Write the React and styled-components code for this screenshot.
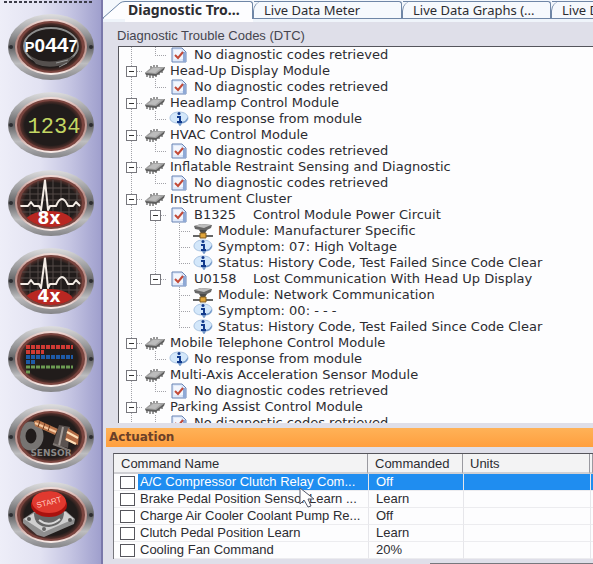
import React, { useState } from "react";
import styled, { createGlobalStyle } from "styled-components";

const TREE = [
    { guides: ["line", "end"], icon: "doc", text: "No diagnostic codes retrieved" },
    { guides: ["toggle"], icon: "chip", text: "Head-Up Display Module" },
    { guides: ["line", "end"], icon: "doc", text: "No diagnostic codes retrieved" },
    { guides: ["toggle"], icon: "chip", text: "Headlamp Control Module" },
    { guides: ["line", "end"], icon: "info", text: "No response from module" },
    { guides: ["toggle"], icon: "chip", text: "HVAC Control Module" },
    { guides: ["line", "end"], icon: "doc", text: "No diagnostic codes retrieved" },
    { guides: ["toggle"], icon: "chip", text: "Inflatable Restraint Sensing and Diagnostic" },
    { guides: ["line", "end"], icon: "doc", text: "No diagnostic codes retrieved" },
    { guides: ["toggle"], icon: "chip", text: "Instrument Cluster" },
    { guides: ["line", "toggle"], icon: "doc", code: "B1325", text: "Control Module Power Circuit" },
    { guides: ["line", "line", "tee"], icon: "net", text: "Module: Manufacturer Specific" },
    { guides: ["line", "line", "tee"], icon: "info", text: "Symptom: 07: High Voltage" },
    { guides: ["line", "line", "end"], icon: "info", text: "Status: History Code, Test Failed Since Code Clear" },
    { guides: ["line", "toggleEnd"], icon: "doc", code: "U0158", text: "Lost Communication With Head Up Display" },
    { guides: ["line", "blank", "tee"], icon: "net", text: "Module: Network Communication" },
    { guides: ["line", "blank", "tee"], icon: "info", text: "Symptom: 00: - - -" },
    { guides: ["line", "blank", "end"], icon: "info", text: "Status: History Code, Test Failed Since Code Clear" },
    { guides: ["toggle"], icon: "chip", text: "Mobile Telephone Control Module" },
    { guides: ["line", "end"], icon: "info", text: "No response from module" },
    { guides: ["toggle"], icon: "chip", text: "Multi-Axis Acceleration Sensor Module" },
    { guides: ["line", "end"], icon: "doc", text: "No diagnostic codes retrieved" },
    { guides: ["toggle"], icon: "chip", text: "Parking Assist Control Module" },
    { guides: ["line", "end"], icon: "doc", text: "No diagnostic codes retrieved" },
];

const COMMANDS = [
    { name: "A/C Compressor Clutch Relay Com...", value: "Off" },
    { name: "Brake Pedal Position Sensor Learn ...", value: "Learn" },
    { name: "Charge Air Cooler Coolant Pump Re...", value: "Off" },
    { name: "Clutch Pedal Position Learn", value: "Learn" },
    { name: "Cooling Fan Command", value: "20%" },
];

const TABS = ["Live Data Meter", "Live Data Graphs (...", "Live Data"];

/* ---------- side bar drawings ---------- */

function CodesArt() {
    return (
        <g>
            <ellipse cx="43" cy="32" rx="27" ry="18" fill="none" stroke="#8d8d8d" strokeWidth="2" />
            <path d="M20 40 Q36 54 66 42 L60 49 Q42 56 28 50z" fill="#55504e" />
            <text x="43" y="38" textAnchor="middle" fill="#fff" fontFamily="'Liberation Sans', sans-serif" fontWeight="bold">
                <tspan fontSize="15">P</tspan>
                <tspan fontSize="19">0</tspan>
                <tspan fontSize="21">44</tspan>
                <tspan fontSize="16">7</tspan>
            </text>
            <path d="M48 49l12 -3M51 53l8 -4" stroke="#999" strokeWidth="1" />
        </g>
    );
}

function DigitsArt() {
    return (
        <text x="46" y="41" fontSize="22" textAnchor="middle" fill="#c3d663" fontFamily="'Liberation Mono', monospace">1234</text>
    );
}

function ScopeArt({ label }) {
    return (
        <g>
            <g stroke="#544b48" strokeWidth="1">
                <path d="M13 18h60M13 24h60M13 30h60M13 42h60" />
                <path d="M22 12v42M30 10v46M45 10v46M53 10v46M61 10v46M69 14v34" />
            </g>
            <ellipse cx="41" cy="52" rx="24" ry="11" fill="#b92722" />
            <path
                d="M11 36H20L23 32L26 36H31L33 40L37 10L40 40L42 36H48Q51 29 54 29Q57 29 60 36H65L68 32L72 36"
                fill="none" stroke="#f3ebe4" strokeWidth="2" strokeLinejoin="round"
            />
            <text x="41" y="54" fontSize="17" fontWeight="bold" textAnchor="middle" fill="#fff" fontFamily="'DejaVu Sans', sans-serif">{label}</text>
        </g>
    );
}

function BarsArt() {
    return (
        <g strokeWidth="4" strokeDasharray="4 1">
            <path d="M18 21H65M18 26H36" stroke="#cf3a33" />
            <path d="M18 31H65M18 36H27" stroke="#1e5aa6" />
            <path d="M18 41H65M18 46H22" stroke="#6c9a52" strokeWidth="3" />
        </g>
    );
}

function SensorArt() {
    return (
        <g>
            <ellipse cx="23" cy="32" rx="9" ry="11" fill="none" stroke="#777472" strokeWidth="7" />
            <text x="43" y="52" fontSize="9" fontWeight="bold" textAnchor="middle" fill="#8a8785" fontFamily="'DejaVu Sans', sans-serif">SENSOR</text>
            <path d="M26 17L30 16L50 25L47 31L27 22z" fill="#b8744a" />
            <path d="M27 19L48 28" stroke="#f6c9a0" strokeWidth="2" />
            <path d="M32 17l-2 6M37 19l-2 6M42 21l-2 6" stroke="#6f3b20" strokeWidth="1" />
            <path d="M51 21L62 23L60 44L45 40z" fill="#5b5350" />
            <path d="M55 23L51 42" stroke="#a39a95" strokeWidth="2" />
            <path d="M60 24L71 31L70 41L57 36z" fill="#b06a45" />
            <path d="M59 28L70 34M58 35L68 40" stroke="#ffe0b8" strokeWidth="2" />
            <path d="M45 40l8 3 7 3" stroke="#7d7672" strokeWidth="2" fill="none" />
        </g>
    );
}

function StartArt() {
    return (
        <g>
            <path d="M15 37L27 29L58 29L67 37L66 42L36 55L29 53L15 41z" fill="#8f8f8f" />
            <path d="M16 37L28 30L58 30L66 37L36 50z" fill="#cfcfcf" />
            <path d="M26 31Q26 45 41 45Q56 43 56 30z" fill="#666" />
            <path d="M31 38Q41 46 52 37" stroke="#d8d8d8" strokeWidth="2" fill="none" />
            <circle cx="21" cy="37" r="2" fill="#555" />
            <circle cx="36" cy="47" r="2" fill="#666" />
            <circle cx="62" cy="38" r="2" fill="#555" />
            <ellipse cx="41" cy="23" rx="18" ry="12" fill="#a9120e" />
            <ellipse cx="41" cy="20" rx="17" ry="11" fill="#e0392f" />
            <text x="41" y="23" fontSize="8" textAnchor="middle" fill="#ffc6bd" transform="rotate(-14 41 20)" fontFamily="'Liberation Sans', sans-serif">START</text>
        </g>
    );
}

const GAUGES = [
    { id: "codes", label: "Trouble codes", art: <CodesArt /> },
    { id: "digits", label: "Live data", art: <DigitsArt /> },
    { id: "scope8", label: "Graph eight channels", art: <ScopeArt label="8x" /> },
    { id: "scope4", label: "Graph four channels", art: <ScopeArt label="4x" /> },
    { id: "bars", label: "Monitors", art: <BarsArt /> },
    { id: "sensor", label: "Oxygen sensor", art: <SensorArt /> },
    { id: "start", label: "Start", art: <StartArt /> },
];

function Gauge({ id, label, art }) {
    return (
        <GaugeButton type="button" aria-label={label}>
            <svg width="86" height="66" viewBox="0 0 86 66">
                <defs>
                    <linearGradient id={id + "-steel"} x1="0" y1="0" x2="0" y2="1">
                        <stop offset="0" stopColor="#dededf" />
                        <stop offset="0.3" stopColor="#98989a" />
                        <stop offset="0.5" stopColor="#5f5f61" />
                        <stop offset="0.75" stopColor="#bdbdbf" />
                        <stop offset="1" stopColor="#858588" />
                    </linearGradient>
                    <linearGradient id={id + "-ring"} x1="0" y1="0" x2="0" y2="1">
                        <stop offset="0" stopColor="#f2dcd8" />
                        <stop offset="0.35" stopColor="#b98d87" />
                        <stop offset="0.7" stopColor="#c9a5a0" />
                        <stop offset="1" stopColor="#fbeeea" />
                    </linearGradient>
                    <radialGradient id={id + "-face"}>
                        <stop offset="0.85" stopColor="#211c1b" />
                        <stop offset="1" stopColor="#54302b" />
                    </radialGradient>
                    <clipPath id={id + "-clip"}>
                        <ellipse cx="43" cy="33" rx="31" ry="24" />
                    </clipPath>
                </defs>
                <ellipse cx="43" cy="33" rx="43" ry="33" fill={`url(#${id}-steel)`} />
                <ellipse cx="43" cy="33" rx="36" ry="28" fill={`url(#${id}-ring)`} />
                <ellipse cx="43" cy="33" rx="34" ry="26" fill="#7a453f" />
                <ellipse cx="43" cy="33" rx="31" ry="24" fill={`url(#${id}-face)`} />
                <g clipPath={`url(#${id}-clip)`}>{art}</g>
                <circle cx="3" cy="33" r="2" fill="#2c2c30" />
                <circle cx="83" cy="33" r="2" fill="#2c2c30" />
            </svg>
        </GaugeButton>
    );
}

/* ---------- tree icons ---------- */

function ChipIcon() {
    return (
        <svg width="22" height="16" viewBox="0 0 22 16">
            <path d="M3 11v3M6 12v3M9 12v3M12 11v3M15 9v3M18 7v3M7 5V3M10 4V2M13 4V2" stroke="#333" strokeWidth="1" />
            <path d="M1 10L8 4L21 4L20 7L12 13L2 12z" fill="#5d5d5d" />
            <path d="M1 10L8 4L21 4L12 11z" fill="#a3a3a3" />
            <path d="M4 9L9 5L17 5L11 10z" fill="#bcbcbc" />
        </svg>
    );
}

function DocIcon() {
    return (
        <svg width="16" height="16" viewBox="0 0 16 16">
            <path d="M1 1H11L15 5V15H1z" fill="#dfe9fa" stroke="#6883b4" />
            <path d="M11 1V5H15V15H12z" fill="#8fa9d6" />
            <path d="M3 3H10V6H12V12H3z" fill="#f3f6fd" />
            <path d="M4 8L7 11L12 5" fill="none" stroke="#c24a38" strokeWidth="2" />
        </svg>
    );
}

function InfoIcon() {
    return (
        <svg width="20" height="16" viewBox="0 0 20 16">
            <path d="M10 1C16 1 19 4 19 7C19 10 16 12 13 12L11 15L9 12C4 12 1 10 1 7C1 4 4 1 10 1z" fill="#d3e7fa" stroke="#a9c4e2" />
            <path d="M13 12C16 12 19 10 19 6L16 10L9 12L11 15z" fill="#6f94c6" />
            <path d="M8 6H11V11M8 11H13" fill="none" stroke="#123a8c" strokeWidth="2" />
            <circle cx="10" cy="2.500" r="1.500" fill="#123a8c" />
        </svg>
    );
}

function NetIcon() {
    return (
        <svg width="22" height="16" viewBox="0 0 22 16">
            <path d="M2 3L9 1L20 2L19 5L13 8L3 6z" fill="#666" />
            <path d="M3 3L9 1L19 2L12 5z" fill="#bdbdbd" />
            <path d="M7 7H15L13 10H9z" fill="#4c4c4c" />
            <path d="M1 13H21" stroke="#666" strokeWidth="2" />
            <path d="M8 10H14V15H8z" fill="#e1a53a" stroke="#7c5a22" />
        </svg>
    );
}

const ICONS = { chip: <ChipIcon />, doc: <DocIcon />, info: <InfoIcon />, net: <NetIcon /> };

function TreeRow({ row }) {
    return (
        <Row>
            {row.guides.map((kind, i) => (
                <Guide key={i} $kind={kind}>
                    {kind.startsWith("toggle") && <Toggle type="button" aria-label={"Collapse " + row.text} />}
                </Guide>
            ))}
            <IconSlot>{ICONS[row.icon]}</IconSlot>
            {row.code && <Code>{row.code}</Code>}
            <span>{row.text}</span>
        </Row>
    );
}

function App() {
    const [checked, setChecked] = useState({});
    const onCheck = (e) => {
        setChecked({
            ...checked,
            [e.target.name]: e.target.checked
        });
    };

    return (
        <>
            <GlobalStyle />
            <Page>
                <SideBar>
                    {GAUGES.map((g) => <Gauge key={g.id} {...g} />)}
                </SideBar>
                <Main>
                    <TabBar>
                        <ActiveTab type="button">
                            <svg width="22" height="18" viewBox="0 0 22 18">
                                <path d="M0 18L17 3Q19 1 22 1V18z" fill="#fdfdff" />
                                <path d="M0 17L17 2Q19 0.500 22 0.500" fill="none" stroke="#6f86a6" />
                            </svg>
                            <TabText $active>Diagnostic Tro...</TabText>
                        </ActiveTab>
                        {TABS.map((t) => <Tab key={t} type="button"><TabText>{t}</TabText></Tab>)}
                    </TabBar>
                    <Title>Diagnostic Trouble Codes (DTC)</Title>
                    <Tree>
                        {TREE.map((row, i) => <TreeRow key={i} row={row} />)}
                    </Tree>
                    <Heading>Actuation</Heading>
                    <TableFrame>
                        <Table>
                            <colgroup>
                                <col width="254" />
                                <col width="95" />
                                <col width="127" />
                                <col />
                            </colgroup>
                            <thead>
                                <tr>
                                    <Th>Command Name</Th>
                                    <Th>Commanded</Th>
                                    <Th>Units</Th>
                                    <Th />
                                </tr>
                            </thead>
                            <tbody>
                                {COMMANDS.map((c, i) => (
                                    <tr key={c.name}>
                                        <NameCell>
                                            <CheckLabel>
                                                <Check type="checkbox" name={c.name} checked={!!checked[c.name]} onChange={onCheck} />
                                                <Name $selected={i === 0}>{c.name}</Name>
                                            </CheckLabel>
                                        </NameCell>
                                        <Td $selected={i === 0}>{c.value}</Td>
                                        <Td $selected={i === 0} />
                                        <Td $selected={i === 0} />
                                    </tr>
                                ))}
                            </tbody>
                        </Table>
                        <Pointer width="17" height="22" viewBox="0 0 17 22">
                            <path d="M1 1V17L5 13L9 20L12 19L9 12H15z" fill="#fff" stroke="#54596b" />
                        </Pointer>
                    </TableFrame>
                    <Foot />
                </Main>
            </Page>
        </>
    )
}

const GlobalStyle = createGlobalStyle`
* {
  box-sizing: border-box;
}
body {
  margin: 0;
  overflow: hidden;
  color: #2c2c31;
  font-family: "Liberation Sans", Arial, sans-serif;
  font-size: 13px;
}
button {
  padding: 0;
  border: 0;
  background: none;
  color: inherit;
  font: inherit;
}
svg {
  display: block;
}
`;

const Page = styled.div`
display: flex;
height: 100vh;
background: #dfdfe9;
`;

const SideBar = styled.nav`
flex: none;
display: flex;
flex-direction: column;
align-items: center;
gap: 12px;
width: 103px;
padding-top: 14px;
overflow: hidden;
border-right: 2px solid #7a78aa;
background:
    repeating-linear-gradient(90deg, #3c3c48 0 3px, transparent 3px 5px) 4px 1px / 90px 2px no-repeat,
    linear-gradient(90deg, #eeeef8 0%, #e2e2f2 40%, #c4c4e2 70%, #9f9fcd 100%);
`;

const GaugeButton = styled.button`
flex: none;
width: 86px;
height: 66px;
`;

const Main = styled.main`
flex: 1;
min-width: 0;
display: flex;
flex-direction: column;
`;

const TabBar = styled.div`
flex: none;
display: flex;
height: 22px;
padding-top: 1px;
overflow: hidden;
background: linear-gradient(#f3f7fc 0 18px, #6f86a6 18px 19px, #eff4fa 19px);
`;

const ActiveTab = styled.button`
flex: none;
display: flex;
width: 150px;
height: 21px;
background: linear-gradient(90deg, transparent 22px, #fdfdff 22px);
`;

const TabText = styled.span`
flex: 1;
height: 18px;
padding-left: ${p => p.$active ? "3px" : "10px"};
border-top: 1px solid #6f86a6;
border-right: 1px solid #6f86a6;
border-top-right-radius: 3px;
font-family: "Noto Sans", sans-serif;
font-size: ${p => p.$active ? "14px" : "13px"};
font-weight: ${p => p.$active ? "bold" : "normal"};
line-height: 16px;
text-align: left;
white-space: nowrap;
`;

const Tab = styled.button`
flex: none;
display: flex;
width: 149px;
height: 17px;
border-left: 1px solid #6f86a6;
border-top-left-radius: 10px;
background: #f6f9fd;
`;

const Title = styled.h1`
flex: none;
margin: 0;
padding: 4px 14px 0;
height: 24px;
color: #45454f;
font-size: 13px;
font-weight: normal;
line-height: 20px;
`;

const Tree = styled.div`
flex: 1;
min-height: 0;
margin-left: 15px;
overflow: hidden;
border-top: 1px solid #55555c;
border-left: 1px solid #55555c;
background: #fdfdfe;
font-family: "DejaVu Sans", sans-serif;
font-size: 13px;
`;

const Row = styled.div`
display: flex;
align-items: center;
height: 16px;
line-height: 16px;
white-space: nowrap;
`;

const dotsDown = "repeating-linear-gradient(#a2a2a8 0 1px, transparent 1px 2px)";
const dotsAcross = "repeating-linear-gradient(90deg, #a2a2a8 0 1px, transparent 1px 2px)";
const full = `${dotsDown} 12px 0 / 1px 16px no-repeat`;
const half = `${dotsDown} 12px 0 / 1px 8px no-repeat`;
const arm = `${dotsAcross} 12px 8px / 12px 1px no-repeat`;
const guideLines = {
    blank: "none",
    line: full,
    tee: `${full}, ${arm}`,
    end: `${half}, ${arm}`,
    toggle: `${full}, ${arm}`,
    toggleEnd: `${half}, ${arm}`,
};

const Guide = styled.span`
flex: none;
display: flex;
align-items: center;
justify-content: center;
width: 24px;
height: 16px;
background: ${p => guideLines[p.$kind]};
`;

const Toggle = styled.button`
width: 11px;
height: 11px;
border: 1px solid #77777d;
background: linear-gradient(#333, #333) center / 5px 1px no-repeat, #fff;
`;

const IconSlot = styled.span`
flex: none;
display: flex;
justify-content: center;
width: 24px;
margin-right: 3px;
`;

const Code = styled.span`
width: 59px;
`;

const Heading = styled.h2`
flex: none;
margin: 5px 0 6px 3px;
padding-left: 3px;
background: linear-gradient(#ffb257, #ff9f3f);
color: #6b4028;
font-family: "DejaVu Sans", sans-serif;
font-size: 12px;
font-weight: bold;
line-height: 19px;
`;

const TableFrame = styled.div`
flex: none;
position: relative;
margin-left: 10px;
border-top: 1px solid #55555c;
border-left: 1px solid #77777d;
background: #fdfdfe;
`;

const Table = styled.table`
width: 100%;
table-layout: fixed;
border-collapse: separate;
border-spacing: 0;
`;

const Th = styled.th`
height: 20px;
padding: 0 7px;
border-right: 1px solid #9a9aa0;
border-bottom: 2px solid #d0d0d4;
background: #f3f3f4;
font-weight: normal;
line-height: 17px;
text-align: left;
white-space: nowrap;
`;

const Td = styled.td`
height: 17px;
padding: 0 7px;
border-left: 1px solid #e6e6ea;
border-bottom: 1px solid #ececef;
background: ${p => p.$selected ? "#1f8df0" : "transparent"};
color: ${p => p.$selected ? "#fff" : "inherit"};
line-height: 16px;
white-space: nowrap;
`;

const NameCell = styled.td`
height: 17px;
padding: 0 0 0 6px;
border-bottom: 1px solid #ececef;
`;

const CheckLabel = styled.label`
display: flex;
align-items: center;
gap: 3px;
height: 16px;
`;

const Check = styled.input`
appearance: none;
flex: none;
width: 15px;
height: 13px;
margin: 0;
border: 1px solid #55555c;
background: #fff;
&:checked {
  background: #1f8df0;
}
`;

const Name = styled.span`
flex: 1;
height: 16px;
padding-left: 2px;
overflow: hidden;
background: ${p => p.$selected ? "#1f8df0" : "transparent"};
color: ${p => p.$selected ? "#fff" : "inherit"};
line-height: 16px;
white-space: nowrap;
`;

const Pointer = styled.svg`
position: absolute;
left: 185px;
top: 33px;
`;

const Foot = styled.div`
flex: none;
height: 5px;
margin-left: 327px;
border-bottom: 1px solid #77777d;
`;

export default App
